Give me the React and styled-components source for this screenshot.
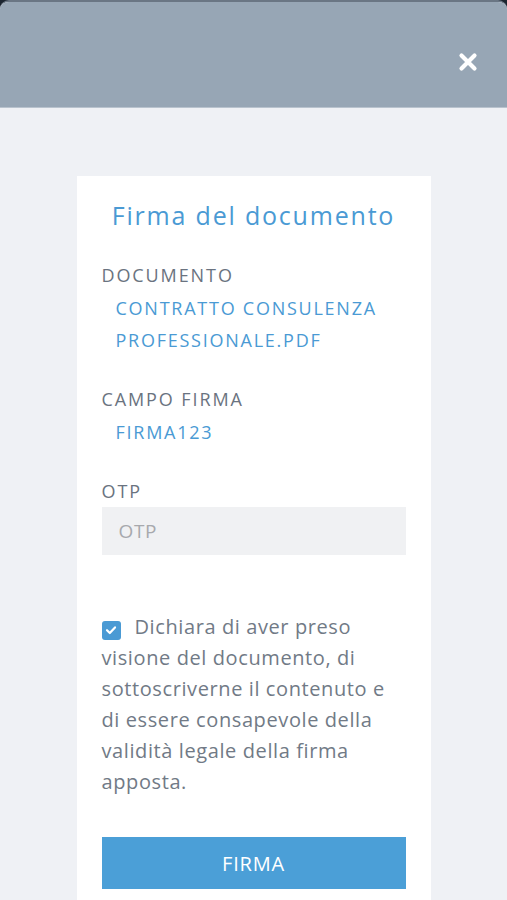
import React from 'react';
import styled, { createGlobalStyle } from 'styled-components';

const GlobalStyle = createGlobalStyle`
  html, body {
    margin: 0;
    padding: 0;
    background: #1c2530;
  }
  body {
    font-family: 'Open Sans', 'Noto Sans', sans-serif;
  }
`

const Screen = styled.div`
  width: 507px;
  height: 900px;
  background: #eff1f5;
  border-radius: 9px 9px 0 0;
  overflow: hidden;
  display: flex;
  flex-direction: column;
  border-top: 2px solid #6a7684;
  box-sizing: border-box;
`

const TopBar = styled.div`
  height: 106px;
  flex-shrink: 0;
  background: #97a6b5;
  display: flex;
  align-items: center;
  justify-content: flex-end;
  padding-right: 29px;
  padding-top: 14px;
  box-sizing: border-box;
  border-bottom: 1px solid #b9c3ce;
`

const CloseButton = styled.button`
  background: none;
  border: none;
  padding: 0;
  width: 20px;
  height: 20px;
  display: flex;
  cursor: pointer;
`

const Body = styled.div`
  flex: 1;
  padding-top: 68px;
  display: flex;
  justify-content: center;
`

const Card = styled.div`
  width: 354px;
  background: #ffffff;
  padding: 22px 25px 0;
  box-sizing: border-box;
`

const Title = styled.h1`
  margin: 0 0 29px;
  text-align: center;
  font-size: 25px;
  font-weight: 400;
  color: #4a9ad4;
  letter-spacing: 1.8px;
  line-height: 34px;
  white-space: nowrap;
`

const Field = styled.div`
  margin-bottom: ${p => p.gap || 0}px;
`

const Label = styled.div`
  font-size: 18px;
  color: #6a7380;
  letter-spacing: 1.9px;
  line-height: 28px;
  text-transform: uppercase;
`

const Value = styled.div`
  margin-top: 3px;
  padding-left: 14px;
  font-size: 18px;
  color: #4a9ad4;
  letter-spacing: 1.75px;
  line-height: 32px;
  white-space: nowrap;
`

const Input = styled.input`
  display: block;
  margin-top: 2px;
  width: 100%;
  height: 48px;
  box-sizing: border-box;
  border: none;
  outline: none;
  background: #f0f1f3;
  padding: 0 17px;
  font-family: 'Open Sans', 'Noto Sans', sans-serif;
  font-size: 19px;
  letter-spacing: 0.6px;
  color: #555;
  &::placeholder {
    color: #a7a9ad;
  }
`

const Declaration = styled.label`
  display: block;
  margin-top: 56px;
  font-size: 20px;
  letter-spacing: 0.6px;
  line-height: 31px;
  color: #717a86;
`

const Check = styled.span`
  display: inline-flex;
  width: 19px;
  height: 19px;
  border-radius: 3px;
  background: #4a9ad4;
  align-items: center;
  justify-content: center;
  vertical-align: -2px;
  margin-right: 14px;
`

const SubmitButton = styled.button`
  display: block;
  width: 100%;
  height: 52px;
  margin-top: 40px;
  border: none;
  background: #4b9fd7;
  color: #ffffff;
  font-family: 'Open Sans', 'Noto Sans', sans-serif;
  font-size: 20px;
  letter-spacing: 0.8px;
  cursor: pointer;
`

const App = () => {
  return (
    <>
      <GlobalStyle />
      <Screen>
        <TopBar>
          <CloseButton aria-label="chiudi">
            <svg width="20" height="20" viewBox="0 0 20 20">
              <path d="M3.5 3.5 L16.5 16.5 M16.5 3.5 L3.5 16.5" stroke="#ffffff" strokeWidth="4.2" strokeLinecap="round" />
            </svg>
          </CloseButton>
        </TopBar>
        <Body>
          <Card>
            <Title>Firma del documento</Title>
            <Field gap={29}>
              <Label>Documento</Label>
              <Value>CONTRATTO CONSULENZA<br />PROFESSIONALE.PDF</Value>
            </Field>
            <Field gap={29}>
              <Label>Campo firma</Label>
              <Value>FIRMA123</Value>
            </Field>
            <Field>
              <Label>OTP</Label>
              <Input placeholder="OTP" />
            </Field>
            <Declaration>
              <Check>
                <svg width="12" height="12" viewBox="0 0 12 12">
                  <path d="M2 6.2 L4.8 9 L10 3.4" fill="none" stroke="#ffffff" strokeWidth="2.2" strokeLinecap="round" strokeLinejoin="round" />
                </svg>
              </Check>
              Dichiara di aver preso visione del documento, di sottoscriverne il contenuto e di essere consapevole della validità legale della firma apposta.
            </Declaration>
            <SubmitButton>FIRMA</SubmitButton>
          </Card>
        </Body>
      </Screen>
    </>
  )
}

export default App
